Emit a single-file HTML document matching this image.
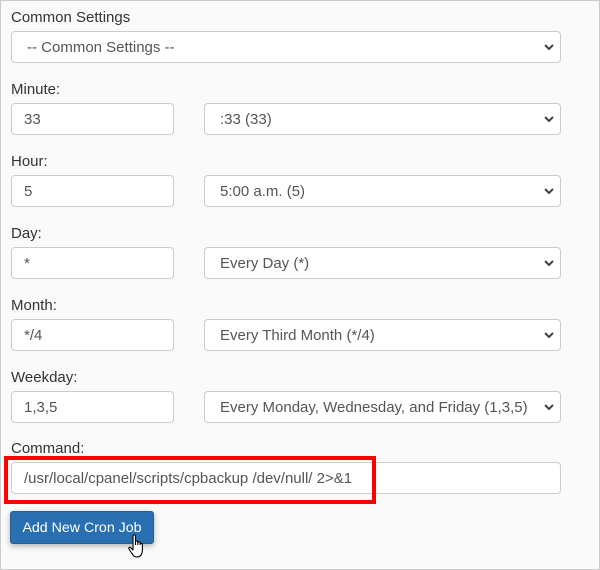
<!DOCTYPE html>
<html><head><style>
html,body{margin:0;padding:0}
body{width:600px;height:570px;position:relative;font-family:"Liberation Sans",sans-serif;font-size:15px;color:#333;overflow:hidden}
.frame{position:absolute;left:0;top:0;width:598px;height:568px;border:1px solid #ccc;background:#fafafa}
.lbl{position:absolute;left:11px;font-size:15px;color:#333}
.box{position:absolute;height:32px;box-sizing:border-box;border:1px solid #ccc;border-radius:4px;background:#fff;line-height:32px;padding-left:12px;color:#555;font-size:15px}
.sel{padding-left:15px}
.sel svg{position:absolute;right:5px;top:11px}
.red{position:absolute;left:4px;top:456px;width:372px;height:48px;box-sizing:border-box;border:4px solid #f00}
.btn{position:absolute;left:10px;top:511px;width:144px;height:33px;background:#2a6faf;border:1px solid #245f96;box-sizing:border-box;border-radius:3px;color:#fff;font-size:14.2px;line-height:32px;text-align:center;box-shadow:0 2px 6px rgba(0,0,0,.3)}
</style></head><body>
<div class="frame"></div>
<div class="lbl" style="top:9px">Common Settings</div>
<div class="box sel" style="left:11px;top:31px;width:550px">-- Common Settings --<svg width="12" height="8" viewBox="0 0 12 8"><path d="M2 2l4 4 4-4" stroke="#444" stroke-width="2" fill="none"/></svg></div>

<div class="lbl" style="top:81px">Minute:</div>
<div class="box" style="left:11px;top:103px;width:163px">33</div>
<div class="box sel" style="left:204px;top:103px;width:357px">:33 (33)<svg width="12" height="8" viewBox="0 0 12 8"><path d="M2 2l4 4 4-4" stroke="#444" stroke-width="2" fill="none"/></svg></div>

<div class="lbl" style="top:153px">Hour:</div>
<div class="box" style="left:11px;top:175px;width:163px">5</div>
<div class="box sel" style="left:204px;top:175px;width:357px">5:00 a.m. (5)<svg width="12" height="8" viewBox="0 0 12 8"><path d="M2 2l4 4 4-4" stroke="#444" stroke-width="2" fill="none"/></svg></div>

<div class="lbl" style="top:225px">Day:</div>
<div class="box" style="left:11px;top:247px;width:163px">*</div>
<div class="box sel" style="left:204px;top:247px;width:357px">Every Day (*)<svg width="12" height="8" viewBox="0 0 12 8"><path d="M2 2l4 4 4-4" stroke="#444" stroke-width="2" fill="none"/></svg></div>

<div class="lbl" style="top:297px">Month:</div>
<div class="box" style="left:11px;top:319px;width:163px">*/4</div>
<div class="box sel" style="left:204px;top:319px;width:357px">Every Third Month (*/4)<svg width="12" height="8" viewBox="0 0 12 8"><path d="M2 2l4 4 4-4" stroke="#444" stroke-width="2" fill="none"/></svg></div>

<div class="lbl" style="top:369px">Weekday:</div>
<div class="box" style="left:11px;top:391px;width:163px">1,3,5</div>
<div class="box sel" style="left:204px;top:391px;width:357px">Every Monday, Wednesday, and Friday (1,3,5)<svg width="12" height="8" viewBox="0 0 12 8"><path d="M2 2l4 4 4-4" stroke="#444" stroke-width="2" fill="none"/></svg></div>

<div class="lbl" style="top:440px">Command:</div>
<div class="box" style="left:11px;top:462px;width:550px">/usr/local/cpanel/scripts/cpbackup /dev/null/ 2&gt;&amp;1</div>
<div class="red"></div>

<div class="btn">Add New Cron Job</div>
<svg style="position:absolute;left:128px;top:534px" width="20" height="26" viewBox="0 0 20 26"><path d="M5 2c0-1.5 2.5-1.5 2.5 0v9 M7.5 10V8c0-1.4 2.3-1.4 2.3 0v3 M9.8 10.5V9c0-1.4 2.3-1.4 2.3 0v2 M12.1 11v-.5c0-1.4 2.3-1.4 2.3 0V16c0 4-2 7-5.5 7S5 21 3 18L1 15c-.8-1.2.8-2.5 1.8-1.3L5 16V2" fill="#fff" stroke="#000" stroke-width="1.1" stroke-linejoin="round"/></svg>
</body></html>
